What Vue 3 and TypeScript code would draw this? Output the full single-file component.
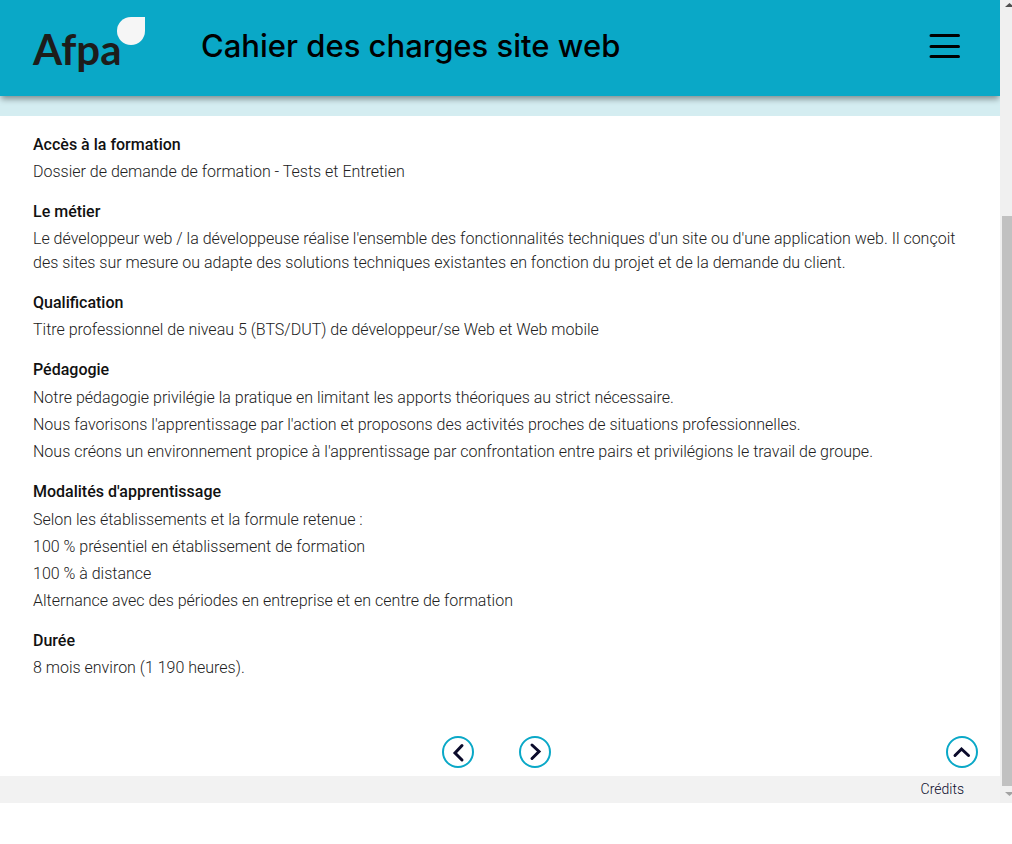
<script setup lang="ts">
interface Section {
  title: string
  lines: string[]
}

const sections: Section[] = [
  { title: 'Accès à la formation', lines: ['Dossier de demande de formation - Tests et Entretien'] },
  {
    title: 'Le métier',
    lines: [
      "Le développeur web / la développeuse réalise l'ensemble des fonctionnalités techniques d'un site ou d'une application web. Il conçoit des sites sur mesure ou adapte des solutions techniques existantes en fonction du projet et de la demande du client.",
    ],
  },
  { title: 'Qualification', lines: ['Titre professionnel de niveau 5 (BTS/DUT) de développeur/se Web et Web mobile'] },
  {
    title: 'Pédagogie',
    lines: [
      'Notre pédagogie privilégie la pratique en limitant les apports théoriques au strict nécessaire.',
      "Nous favorisons l'apprentissage par l'action et proposons des activités proches de situations professionnelles.",
      "Nous créons un environnement propice à l'apprentissage par confrontation entre pairs et privilégions le travail de groupe.",
    ],
  },
  {
    title: "Modalités d'apprentissage",
    lines: [
      'Selon les établissements et la formule retenue :',
      '100 % présentiel en établissement de formation',
      '100 % à distance',
      'Alternance avec des périodes en entreprise et en centre de formation',
    ],
  },
  { title: 'Durée', lines: ['8 mois environ (1 190 heures).'] },
]
</script>

<template>
  <div class="viewport">
    <div class="page">
      <header class="header">
        <a class="logo" href="#" aria-label="Afpa">
          <span class="logo-name">Afpa</span>
          <span class="logo-leaf"></span>
        </a>
        <h1 class="title">Cahier des charges site web</h1>
        <button class="menu" type="button" aria-label="Menu">
          <svg width="32" height="26" viewBox="0 0 32 26" aria-hidden="true">
            <path d="M2 2.5H29.500M2 13.5H29.500M2 23.5H29.500" fill="none" stroke="#000" stroke-width="3" stroke-linecap="round" />
          </svg>
        </button>
      </header>
      <div class="band"></div>

      <main class="content">
        <section v-for="section in sections" :key="section.title" class="section">
          <h2>{{ section.title }}</h2>
          <ul v-if="section.lines.length > 1">
            <li v-for="line in section.lines" :key="line">{{ line }}</li>
          </ul>
          <p v-else>{{ section.lines[0] }}</p>
        </section>
      </main>

      <nav class="pager" aria-label="Navigation">
        <span></span>
        <div class="pager-steps">
          <a class="round" href="#" aria-label="Page précédente">
            <svg viewBox="0 0 32 32" aria-hidden="true"><path d="M20 9.5L13 17L20 24" /></svg>
          </a>
          <a class="round" href="#" aria-label="Page suivante">
            <svg viewBox="0 0 32 32" aria-hidden="true"><path d="M13 9L20 15.500L13 22.500" /></svg>
          </a>
        </div>
        <a class="round to-top" href="#" aria-label="Haut de page">
          <svg viewBox="0 0 32 32" aria-hidden="true"><path d="M9 19.500L15.500 13L22.500 19.500" /></svg>
        </a>
      </nav>

      <footer class="footer"><a href="#">Crédits</a></footer>
    </div>

    <div class="scrollbar" aria-hidden="true">
      <svg class="arrow" width="9" height="4" viewBox="0 0 9 4"><path d="M0 4L4.500 0L9 4Z" fill="#505050" /></svg>
      <div class="thumb"></div>
      <svg class="arrow" width="9" height="4" viewBox="0 0 9 4"><path d="M0 0L4.500 4L9 0Z" fill="#a3a3a3" /></svg>
    </div>
  </div>
</template>

<style>
body {
  margin: 0;
  background: #fff;
}
</style>

<style scoped>
.viewport {
  display: flex;
  color: #212121;
  font-family: Roboto, "Liberation Sans", sans-serif;
  font-size: 16px;
  font-weight: 300;
  line-height: 24px;
}

.page {
  flex: 1;
  min-width: 0;
  overflow: hidden;
}

.header {
  position: relative;
  display: flex;
  align-items: center;
  box-sizing: border-box;
  height: 96px;
  padding: 0 39px 4px 33px;
  background: #0aa8c7;
  box-shadow: 0 4px 6px -1px rgba(0, 0, 0, 0.4);
}

.logo {
  display: flex;
  align-items: flex-start;
  width: 168px;
  height: 58px;
  color: #1d1d1b;
  text-decoration: none;
}

.logo-name {
  width: 84px;
  padding-top: 8px;
  font: 700 42px/48px Lato, sans-serif;
}

.logo-leaf {
  width: 28px;
  height: 28px;
  border-radius: 50% 0 50% 50%;
  background: #f6f6f6;
}

.title {
  flex: 1;
  margin: 0;
  color: #000;
  font: 500 31px/40px Inter, sans-serif;
}

.menu {
  display: flex;
  padding: 0;
  border: 0;
  background: none;
}

.band {
  height: 20px;
  background: #d4edf1;
}

.content {
  padding: 17px 33px 0;
}

.section {
  margin-bottom: 16px;
}

.section h2 {
  margin: 0;
  color: #111;
  font-size: 16px;
  font-weight: 500;
  line-height: 24px;
}

.section p {
  margin: 3px 0 0;
}

.section ul {
  display: grid;
  gap: 3px;
  margin: 4px 0 0;
  padding: 0;
  list-style: none;
}

.pager {
  display: grid;
  grid-template-columns: 1fr auto 1fr;
  align-items: center;
  padding: 40px 22px 8px 15px;
}

.pager-steps {
  display: flex;
  gap: 45px;
}

.round {
  box-sizing: border-box;
  width: 32px;
  height: 32px;
  border: 2px solid #0aa8c7;
  border-radius: 50%;
}

.round svg {
  display: block;
  width: 32px;
  height: 32px;
  margin: -2px;
  fill: none;
  stroke: #0b0b2b;
  stroke-width: 3;
  stroke-linecap: round;
}

.to-top {
  justify-self: end;
}

.footer {
  display: flex;
  justify-content: flex-end;
  padding: 1px 36px 2px;
  background: #f2f2f2;
  font-size: 14px;
}

.footer a {
  color: #0b0b2b;
  text-decoration: none;
}

.scrollbar {
  display: flex;
  flex-direction: column;
  box-sizing: border-box;
  width: 12px;
  padding: 3px 0 7px 2px;
  overflow: hidden;
  background: #f0f0f0;
}

.arrow {
  flex: none;
  margin-left: 3px;
}

.thumb {
  flex: 1;
  margin: 209px 0 6px;
  background: #c1c1c1;
}
</style>
